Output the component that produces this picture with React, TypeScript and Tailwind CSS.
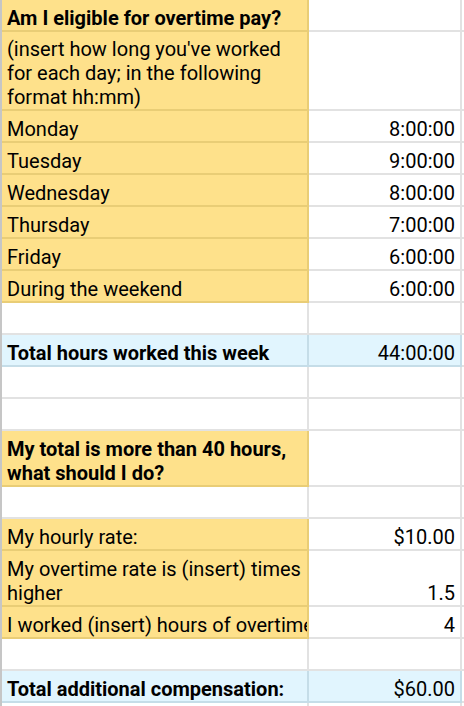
type Kind = "yellow" | "blue" | "blank"

type Row = {
  a?: string
  b?: string
  h: string
  kind: Kind
  bold?: boolean
  wrap?: boolean
}

const rows: Row[] = [
  { a: "Am I eligible for overtime pay?", h: "h-[32px]", kind: "yellow", bold: true },
  {
    a: "(insert how long you've worked for each day; in the following format hh:mm)",
    h: "h-[79px]",
    kind: "yellow",
    wrap: true,
  },
  { a: "Monday", b: "8:00:00", h: "h-[32px]", kind: "yellow" },
  { a: "Tuesday", b: "9:00:00", h: "h-[32px]", kind: "yellow" },
  { a: "Wednesday", b: "8:00:00", h: "h-[32px]", kind: "yellow" },
  { a: "Thursday", b: "7:00:00", h: "h-[32px]", kind: "yellow" },
  { a: "Friday", b: "6:00:00", h: "h-[32px]", kind: "yellow" },
  { a: "During the weekend", b: "6:00:00", h: "h-[32px]", kind: "yellow" },
  { h: "h-[32px]", kind: "blank" },
  { a: "Total hours worked this week", b: "44:00:00", h: "h-[32px]", kind: "blue", bold: true },
  { h: "h-[32px]", kind: "blank" },
  { h: "h-[32px]", kind: "blank" },
  {
    a: "My total is more than 40 hours, what should I do?",
    h: "h-[56px]",
    kind: "yellow",
    bold: true,
    wrap: true,
  },
  { h: "h-[32px]", kind: "blank" },
  { a: "My hourly rate:", b: "$10.00", h: "h-[32px]", kind: "yellow" },
  {
    a: "My overtime rate is (insert) times higher",
    b: "1.5",
    h: "h-[56px]",
    kind: "yellow",
    wrap: true,
  },
  { a: "I worked (insert) hours of overtime", b: "4", h: "h-[32px]", kind: "yellow" },
  { h: "h-[32px]", kind: "blank" },
  { a: "Total additional compensation:", b: "$60.00", h: "h-[32px]", kind: "blue", bold: true },
  { h: "h-[32px]", kind: "blank" },
]

// cell fill + grid line colour per row kind
const cellA: Record<Kind, string> = {
  yellow: "bg-[#fee18b] border-[#e9cd76]",
  blue: "bg-[#e1f5fe] border-[#c5dde8]",
  blank: "bg-white border-[#e2e2e2]",
}

const cellB: Record<Kind, string> = {
  yellow: "bg-white border-[#e2e2e2]",
  blue: "bg-[#e1f5fe] border-[#c5dde8]",
  blank: "bg-white border-[#e2e2e2]",
}

export default function App() {
  return (
    <div className="w-[464px] h-[706px] overflow-hidden bg-white border-l-2 border-[#c6c6c6] text-black font-['Roboto',sans-serif] text-[20px] leading-[24px]">
      {rows.map((r, i) => (
        <div key={i} className={`flex ${r.h}`}>
          {/* Column A */}
          <div
            className={`w-[307px] shrink-0 flex items-end border-r-2 border-b-2 pl-[5px] overflow-hidden ${cellA[r.kind]} ${
              r.bold ? "font-bold" : ""
            }`}
          >
            <span className={r.wrap ? "pr-[4px]" : "whitespace-nowrap"}>{r.a}</span>
          </div>
          {/* Column B */}
          <div
            className={`w-[153px] shrink-0 flex items-end justify-end border-r-2 border-b-2 pr-[5px] ${cellB[r.kind]}`}
          >
            <span className="whitespace-nowrap">{r.b}</span>
          </div>
          {/* Column C */}
          <div className="flex-1 border-b-2 border-[#e2e2e2]" />
        </div>
      ))}
    </div>
  )
}
